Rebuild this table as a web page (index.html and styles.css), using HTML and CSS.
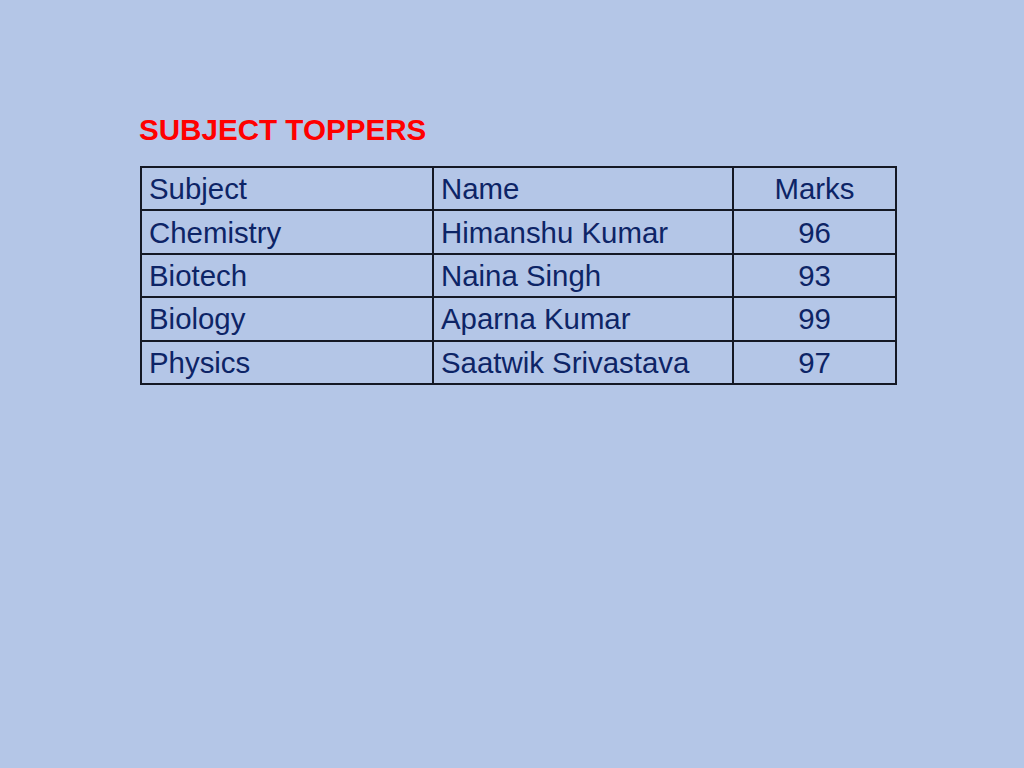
FILE: index.html
```html
<!DOCTYPE html>
<html>
<head>
<meta charset="utf-8">
<link rel="stylesheet" href="styles.css">
</head>
<body>
<div class="slide">
  <h1 class="title">SUBJECT TOPPERS</h1>
  <table class="toppers">
    <colgroup>
      <col class="c-subject">
      <col class="c-name">
      <col class="c-marks">
    </colgroup>
    <tr><td>Subject</td><td>Name</td><td class="num">Marks</td></tr>
    <tr><td>Chemistry</td><td>Himanshu Kumar</td><td class="num">96</td></tr>
    <tr><td>Biotech</td><td>Naina Singh</td><td class="num">93</td></tr>
    <tr><td>Biology</td><td>Aparna Kumar</td><td class="num">99</td></tr>
    <tr><td>Physics</td><td>Saatwik Srivastava</td><td class="num">97</td></tr>
  </table>
</div>
</body>
</html>
```
FILE: styles.css
```css
html, body {
  margin: 0;
  padding: 0;
  background: #b4c6e7;
  width: 1024px;
  height: 768px;
  overflow: hidden;
}
.slide {
  padding: 113px 0 0 139px;
  font-family: "Liberation Sans", Arial, sans-serif;
}
.title {
  margin: 0 0 19px 0;
  font-size: 29.6px;
  line-height: 34px;
  font-weight: bold;
  color: #ff0000;
}
.toppers {
  margin-left: 1px;
  border-collapse: collapse;
  table-layout: fixed;
  width: 755px;
}
.c-subject { width: 292px; }
.c-name { width: 300px; }
.c-marks { width: 163px; }
.toppers td {
  border: 2px solid #141824;
  padding: 0 7px;
  height: 41.4px;
  font-size: 29.4px;
  line-height: 33px;
  color: #0d2466;
  vertical-align: middle;
  white-space: nowrap;
}
.toppers td.num {
  text-align: center;
}
```
